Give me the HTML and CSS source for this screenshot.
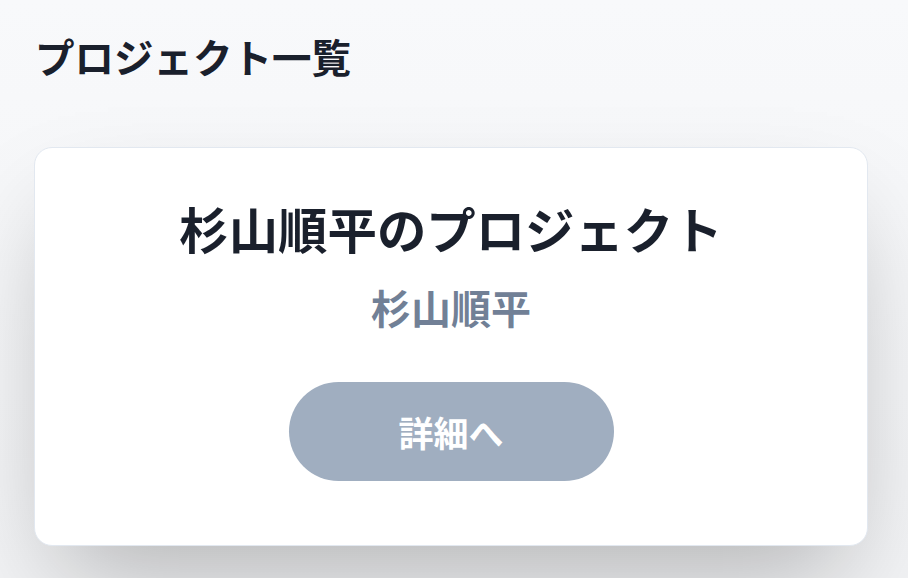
FILE: index.html
```html
<!DOCTYPE html>
<html lang="ja">
<head>
<meta charset="utf-8">
<title>プロジェクト一覧</title>
<link rel="stylesheet" href="styles.css">
</head>
<body>
<main class="page">
  <h1 class="page-title">プロジェクト一覧</h1>
  <section class="card">
    <h2 class="card-title">杉山順平のプロジェクト</h2>
    <p class="card-owner">杉山順平</p>
    <a class="card-button" href="#">詳細へ</a>
  </section>
</main>
</body>
</html>
```
FILE: styles.css
```css
* { box-sizing: border-box; }
html, body {
  margin: 0;
  height: 100%;
}
body {
  font-family: "Noto Sans CJK JP", "Noto Sans", sans-serif;
  background: linear-gradient(180deg, #f8f9fb 0%, #f2f3f5 100%);
  overflow: hidden;
}
.page {
  padding: 27px 40px 0 34px;
  display: flex;
  flex-direction: column;
}
.page-title {
  margin: 0 0 0 1px;
  font-size: 39.5px;
  line-height: 57px;
  font-weight: 700;
  color: #1a202c;
}
.card {
  margin-top: 63px;
  background: #fff;
  border: 1px solid #e2e8f0;
  border-radius: 18px;
  box-shadow: 0 50px 100px -24px rgba(0, 0, 0, 0.27);
  padding: 44px 0 64px;
  display: flex;
  flex-direction: column;
  align-items: center;
}
.card-title {
  margin: 0;
  font-size: 49.4px;
  line-height: 72px;
  font-weight: 700;
  color: #1a202c;
}
.card-owner {
  margin: 15px 0 0;
  font-size: 40px;
  line-height: 57px;
  font-weight: 700;
  color: #718096;
}
.card-button {
  margin-top: 46px;
  width: 325px;
  height: 99px;
  border-radius: 50px;
  background: #a0aec0;
  color: #fff;
  font-size: 35px;
  font-weight: 700;
  text-decoration: none;
  display: flex;
  align-items: center;
  justify-content: center;
}
```
